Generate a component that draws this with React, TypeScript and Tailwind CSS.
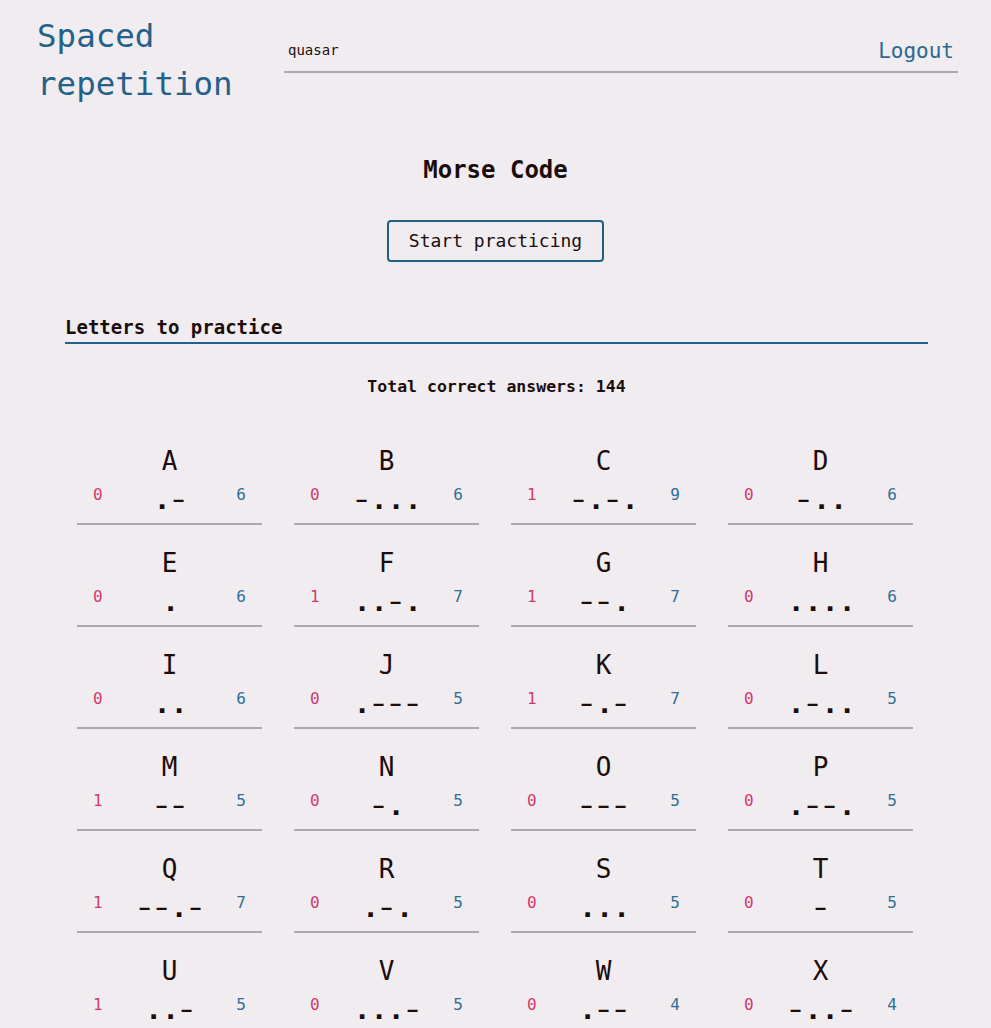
import React from 'react';

type Letter = { ch: string; code: string; wrong: number; right: number };

const letters: Letter[] = [
  { ch: 'A', code: '.-', wrong: 0, right: 6 },
  { ch: 'B', code: '-...', wrong: 0, right: 6 },
  { ch: 'C', code: '-.-.', wrong: 1, right: 9 },
  { ch: 'D', code: '-..', wrong: 0, right: 6 },
  { ch: 'E', code: '.', wrong: 0, right: 6 },
  { ch: 'F', code: '..-.', wrong: 1, right: 7 },
  { ch: 'G', code: '--.', wrong: 1, right: 7 },
  { ch: 'H', code: '....', wrong: 0, right: 6 },
  { ch: 'I', code: '..', wrong: 0, right: 6 },
  { ch: 'J', code: '.---', wrong: 0, right: 5 },
  { ch: 'K', code: '-.-', wrong: 1, right: 7 },
  { ch: 'L', code: '.-..', wrong: 0, right: 5 },
  { ch: 'M', code: '--', wrong: 1, right: 5 },
  { ch: 'N', code: '-.', wrong: 0, right: 5 },
  { ch: 'O', code: '---', wrong: 0, right: 5 },
  { ch: 'P', code: '.--.', wrong: 0, right: 5 },
  { ch: 'Q', code: '--.-', wrong: 1, right: 7 },
  { ch: 'R', code: '.-.', wrong: 0, right: 5 },
  { ch: 'S', code: '...', wrong: 0, right: 5 },
  { ch: 'T', code: '-', wrong: 0, right: 5 },
  { ch: 'U', code: '..-', wrong: 1, right: 5 },
  { ch: 'V', code: '...-', wrong: 0, right: 5 },
  { ch: 'W', code: '.--', wrong: 0, right: 4 },
  { ch: 'X', code: '-..-', wrong: 0, right: 4 },
  { ch: 'Y', code: '-.--', wrong: 0, right: 4 },
  { ch: 'Z', code: '--..', wrong: 0, right: 4 },
];

const total = letters.reduce((sum, l) => sum + l.right, 0);

// dots bold and round, dashes thin and a bit stretched like the reference font
function Code({ code }: { code: string }) {
  return (
    <span className="text-[28px] leading-[24px] text-[#1c0d0d] pt-[5px] whitespace-pre">
      {code.split('').map((c, i) =>
        c === '.' ? (
          <span key={i} className="font-['Liberation_Mono',monospace] font-bold text-[32px] inline-block w-[17px] text-center">
            {c}
          </span>
        ) : (
          <span key={i} className="inline-block w-[17px] text-center font-normal scale-x-[1.4]">
            {c}
          </span>
        )
      )}
    </span>
  );
}

function LetterCard({ item }: { item: Letter }) {
  return (
    <div className="h-[102px] border-b-2 border-[#a9a9ae] flex flex-col items-center pt-[22px]">
      <div className="text-[26px] leading-[32px] text-[#1c0d0d]">{item.ch}</div>
      <div className="w-full mt-[6px] px-4 flex justify-between items-start">
        <span className="text-[16px] leading-[24px] text-[#d2396c]">{item.wrong}</span>
        <Code code={item.code} />
        <span className="text-[16px] leading-[24px] text-[#2f6f97]">{item.right}</span>
      </div>
    </div>
  );
}

export default function App() {
  return (
    <div className="min-h-screen bg-[#f0ecef] text-[#1c0d0d] font-['DejaVu_Sans_Mono','Liberation_Mono',monospace]">
      {/* Header */}
      <header className="flex items-start pl-[37px] pr-[33px] pt-[12px]">
        <h1 className="w-[247px] text-[32.5px] leading-[48px] text-[#23618a]">
          Spaced
          <br />
          repetition
        </h1>
        <nav className="flex-1 mt-[17px] h-[44px] border-b-2 border-[#a9a9ae] flex items-center justify-between pl-1 pr-1">
          <span className="text-[14px] text-[#1c0d0d] mt-[1px]">quasar</span>
          <a className="text-[21px] text-[#2a6a92] cursor-pointer mt-[3px]">Logout</a>
        </nav>
      </header>

      <main className="flex flex-col items-center">
        <h2 className="mt-[46px] text-[24px] leading-[32px] font-bold">Morse Code</h2>
        <button className="mt-[34px] px-[20px] py-[5px] border-2 border-[#1f5f86] rounded text-[18px] leading-[28px]">
          Start practicing
        </button>

        <section className="w-full pl-[65px] pr-[63px] mt-[51px]">
          <h3 className="text-[19px] leading-[28px] font-bold border-b-2 border-[#23618a] pb-[1px]">
            Letters to practice
          </h3>
          <p className="mt-[31px] text-center text-[16.5px] leading-[24px] font-bold">
            Total correct answers: {total}
          </p>
          <div className="mt-[24px] ml-[12px] grid grid-cols-[repeat(4,185px)] gap-x-[32px] pb-10">
            {letters.map((l) => (
              <LetterCard key={l.ch} item={l} />
            ))}
          </div>
        </section>
      </main>
    </div>
  );
}
